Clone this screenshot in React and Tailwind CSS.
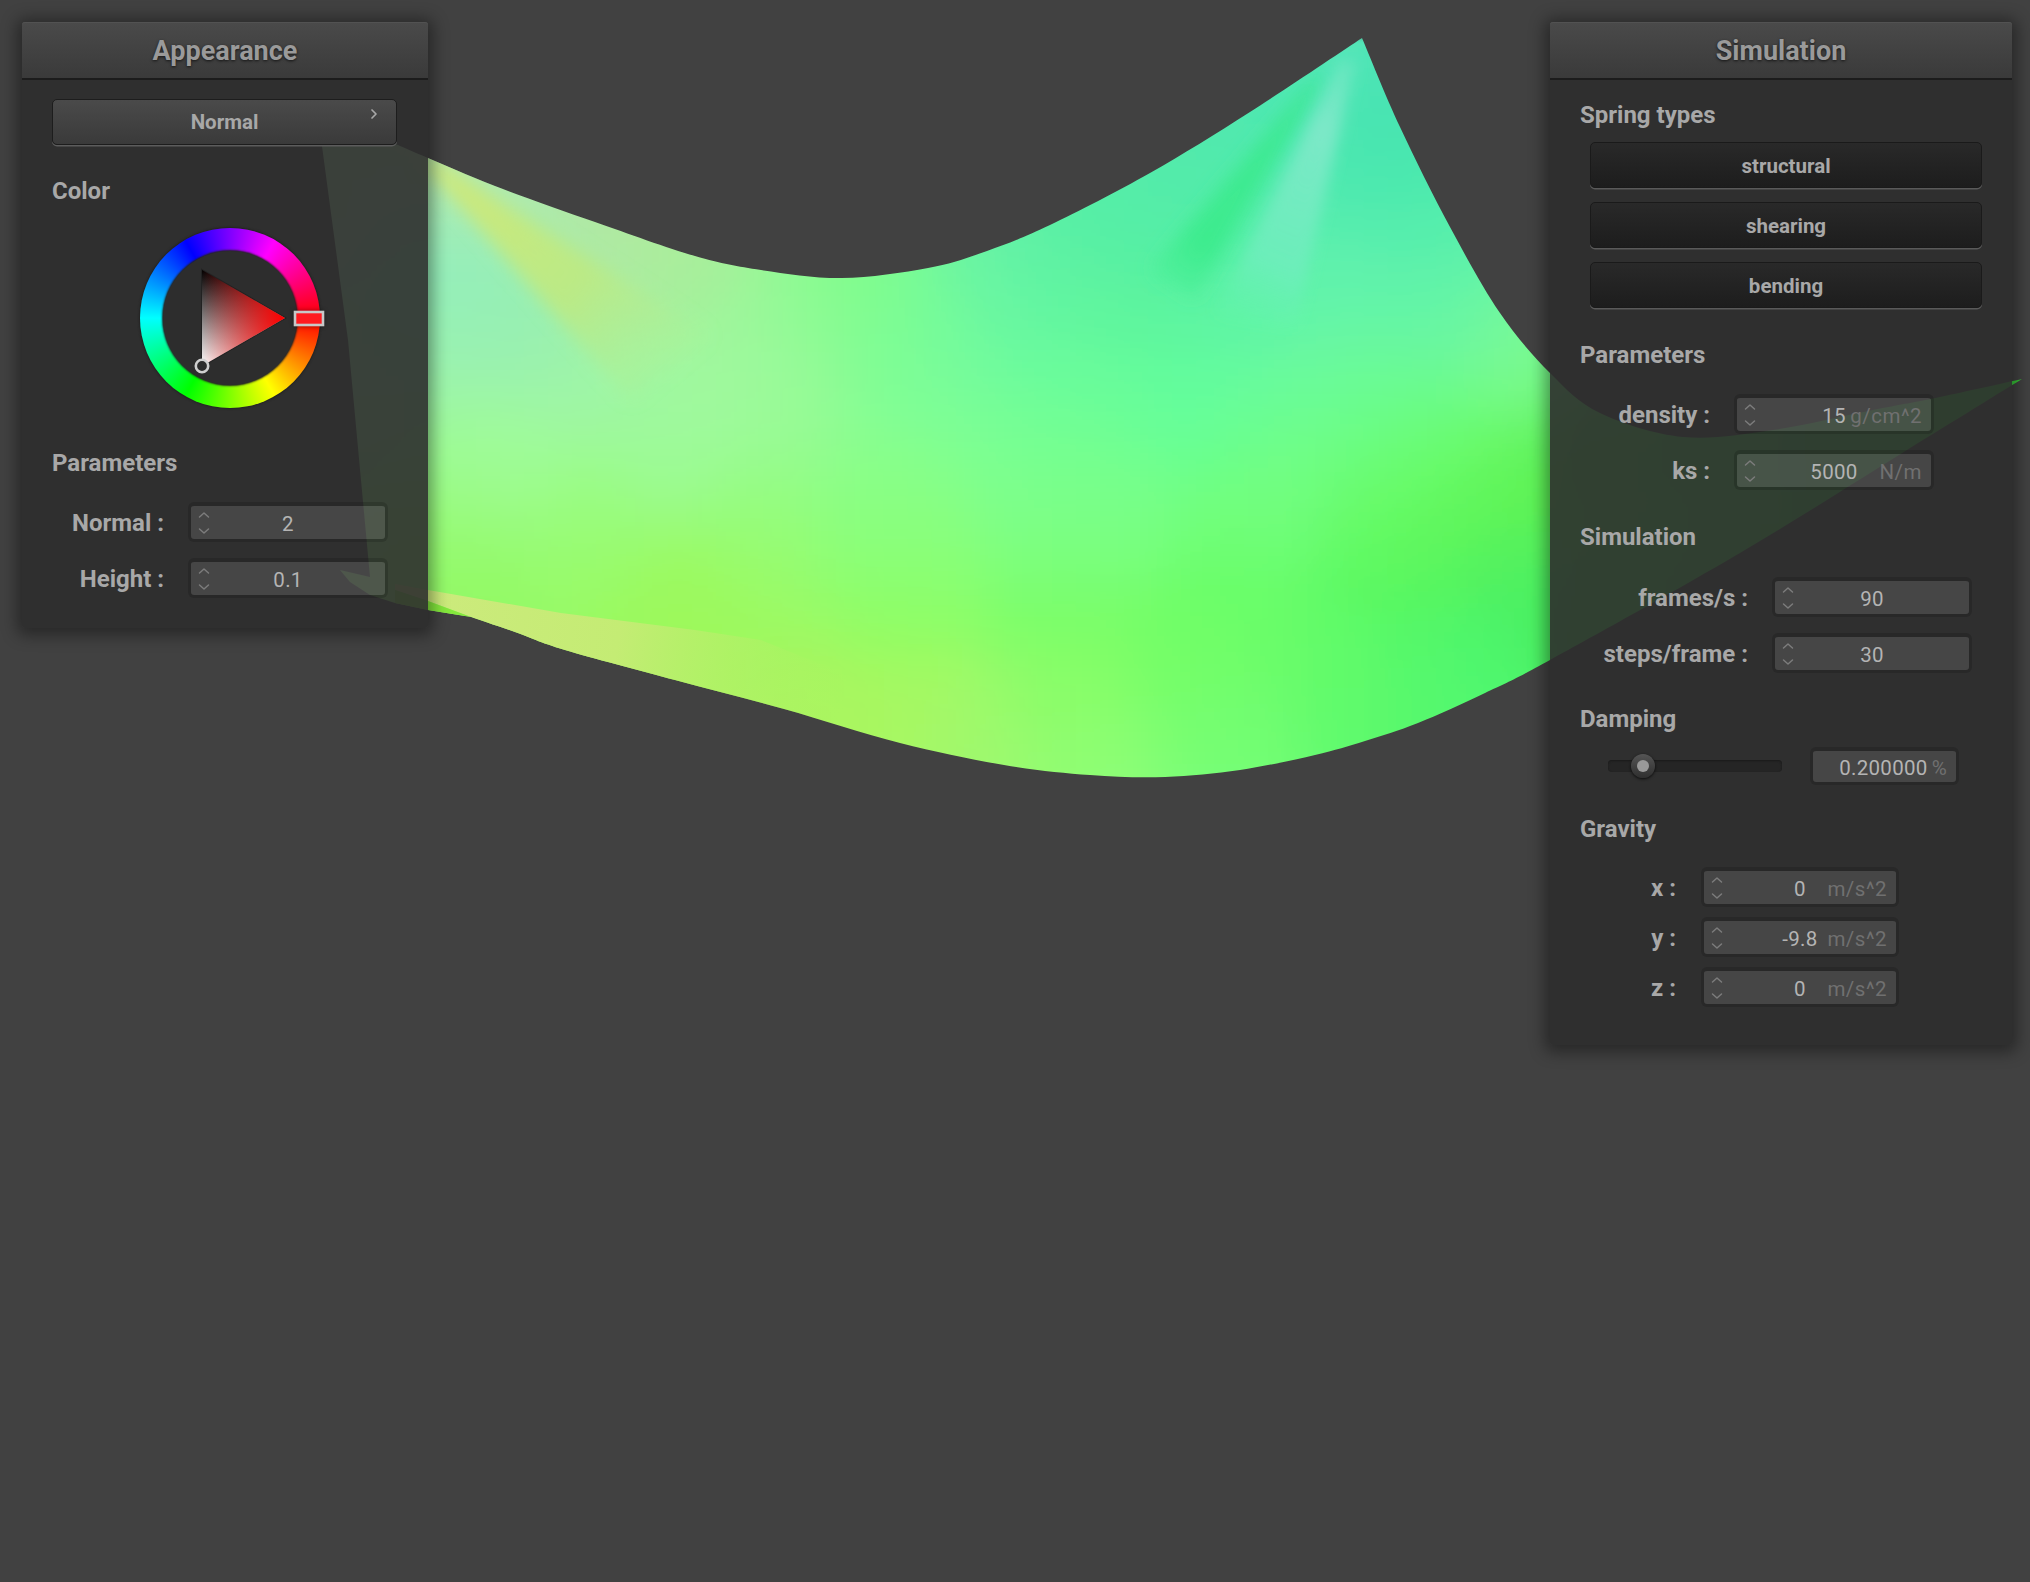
import React from "react";

const catmull = (pts) => {
  let d = "";
  for (let i = 0; i < pts.length - 1; i++) {
    const p0 = pts[i - 1] || pts[i];
    const p1 = pts[i];
    const p2 = pts[i + 1];
    const p3 = pts[i + 2] || p2;
    d += ` C${(p1[0] + (p2[0] - p0[0]) / 6).toFixed(1)} ${(p1[1] + (p2[1] - p0[1]) / 6).toFixed(1)} ${(p2[0] - (p3[0] - p1[0]) / 6).toFixed(1)} ${(p2[1] - (p3[1] - p1[1]) / 6).toFixed(1)} ${p2[0].toFixed(1)} ${p2[1].toFixed(1)}`;
  }
  return d;
};

const clothPath =
  "M318 113 L398 145" +
  catmull([[398, 145], [428, 158], [495, 186], [595, 222], [695, 256], [761, 270], [842, 278], [928, 268], [987, 251], [1050, 225], [1150, 173], [1250, 112], [1362, 38]]) +
  catmull([[1362, 38], [1400, 127], [1450, 227], [1500, 313], [1550, 373], [1600, 413], [1683, 437], [1773, 430], [1873, 410], [1940, 397], [2022, 379]]) +
  catmull([[2022, 379], [1907, 450], [1740, 553], [1550, 660], [1485, 693], [1418, 723], [1365, 741], [1315, 755], [1240, 770], [1165, 777], [1090, 775], [1004, 765], [900, 743], [784, 709], [675, 680], [565, 650], [515, 632], [471, 617]]) +
  " L428 610 L395 603 L370 595 L350 582 L340 570 L370 577 L348 340 L322 146 Z";

const samples = [
  [448, 167, "#b8e8b0"], [495, 180, "#b8e8a8"], [595, 233, "#b2e8a2"], [695, 263, "#a8ee9a"], [448, 243, "#90eec0"], [478, 283, "#90efba"],
  [528, 327, "#98efb0"], [448, 350, "#9cf2b0"], [595, 383, "#a0f5a8"], [728, 383, "#a2f8a0"], [795, 317, "#94fa98"],
  [861, 283, "#7efc88"], [911, 317, "#7cfe94"], [911, 400, "#80ff94"], [795, 417, "#96fb94"], [661, 450, "#9dfa9a"],
  [495, 450, "#a0fc9c"], [448, 483, "#9cfc90"], [595, 517, "#98fe80"], [761, 517, "#94fe80"], [895, 517, "#86ff80"],
  [448, 550, "#96fb70"], [595, 577, "#98fa66"], [761, 583, "#98fb68"], [911, 550, "#88ff70"], [448, 583, "#90f85a"],
  [661, 617, "#9cf858"], [711, 627, "#a0f858"], [895, 600, "#90fe60"], [802, 700, "#acf460"], [900, 717, "#a8f860"],
  [983, 750, "#a0f870"], [1107, 767, "#90fe78"], [1232, 760, "#78fe78"], [1398, 717, "#58f868"], [900, 500, "#8cff90"],
  [1000, 320, "#62f6a4"], [950, 360, "#78fc9c"], [1000, 450, "#7cff94"], [1066, 400, "#68ff9c"], [1190, 407, "#60ffa0"],
  [1356, 417, "#6cff90"], [1066, 500, "#78ff88"], [1232, 500, "#70ff78"], [1398, 483, "#6cfc68"], [1501, 517, "#62f050"],
  [1398, 540, "#60f858"], [1501, 573, "#46f068"], [1398, 587, "#52f868"], [1232, 587, "#68fe68"], [1066, 587, "#78fe68"],
  [1190, 667, "#74fe64"], [1315, 667, "#66fc68"], [1481, 660, "#50f86e"], [1066, 700, "#88fe66"], [1232, 717, "#70fe70"],
  [1356, 717, "#60fa70"], [1522, 587, "#48f068"], [1460, 690, "#50f872"], [1439, 533, "#60f450"],
  [1357, 50, "#5ce8bc"], [1250, 280, "#58f0a8"], [1223, 313, "#60f4a8"], [1150, 313, "#56f29a"], [1250, 97, "#50e8b0"],
  [1183, 163, "#50e8ac"], [1117, 197, "#54ecaa"], [1083, 237, "#56f0a4"], [1083, 297, "#60f4a0"], [1083, 363, "#6afa9c"],
  [1383, 97, "#40e0b0"], [1383, 163, "#48e6b0"], [1417, 213, "#50ecac"], [1450, 280, "#5cf2ac"], [1350, 280, "#62f2b0"],
  [1300, 330, "#68f4ac"], [1400, 330, "#66f6a4"], [1500, 330, "#76f8a0"], [1533, 373, "#80fc88"], [1383, 397, "#6cfc90"],
  [1283, 397, "#6cfe94"], [1183, 397, "#66ff98"], [1083, 430, "#70ff94"], [1450, 447, "#68fe78"], [1517, 497, "#66f850"],
  [1283, 480, "#74fe84"], [1383, 497, "#6afe70"], [1117, 497, "#7aff86"], [1050, 497, "#80ff88"], [987, 256, "#68f0a8"],
  [1300, 180, "#52eab0"], [1200, 230, "#54eea6"],
  [340, 200, "#b0e8b0"], [350, 400, "#a0f0a8"], [360, 560, "#96f880"],
  [1600, 450, "#46e050"], [1800, 470, "#42d850"], [1900, 430, "#40d048"], [2020, 380, "#38c838"], [1600, 620, "#46e048"], [1720, 550, "#44d848"],
].map(([x, y, c]) => [x, y, [1, 3, 5].map((i) => parseInt(c.slice(i, i + 2), 16))]);

const sampleColor = (x, y) => {
  let tot = 0;
  const sum = [0, 0, 0];
  for (const [sx, sy, c] of samples) {
    const d = (sx - x) ** 2 + (sy - y) ** 2;
    const w = Math.exp(-d / 5000) + 1e-6 / (1 + d / 10000);
    tot += w;
    sum[0] += w * c[0];
    sum[1] += w * c[1];
    sum[2] += w * c[2];
  }
  return `rgb(${sum.map((n) => Math.round(n / tot)).join(",")})`;
};

const stopXs = [];
for (let x = 320; x <= 1600; x += 24) stopXs.push(x);
stopXs.push(1800, 2030);
const bandYs = [];
for (let y = 36; y < 790; y += 4) bandYs.push(y);

function Cloth() {
  return (
    <svg className="absolute inset-0" width="2030" height="1582" viewBox="0 0 2030 1582">
      <defs>
        <clipPath id="cloth">
          <path d={clothPath} />
        </clipPath>
        {bandYs.map((y) => (
          <linearGradient key={y} id={`band${y}`} gradientUnits="userSpaceOnUse" x1="320" x2="2030" y1="0" y2="0">
            {stopXs.map((x) => (
              <stop key={x} offset={(x - 320) / 1710} stopColor={sampleColor(x, y + 2)} />
            ))}
          </linearGradient>
        ))}
        <filter id="soft" x="-5%" y="-5%" width="110%" height="110%">
          <feGaussianBlur stdDeviation="3" />
        </filter>
        <filter id="crease" x="-40%" y="-40%" width="180%" height="180%">
          <feGaussianBlur stdDeviation="9" />
        </filter>
        <filter id="creaseTight" x="-40%" y="-40%" width="180%" height="180%">
          <feGaussianBlur stdDeviation="7" />
        </filter>
        <linearGradient id="yellowFade" gradientUnits="userSpaceOnUse" x1="430" y1="170" x2="700" y2="380">
          <stop offset="0" stopColor="#d0e878" stopOpacity="1" />
          <stop offset="0.55" stopColor="#bcea84" stopOpacity="0.95" />
          <stop offset="1" stopColor="#aef096" stopOpacity="0" />
        </linearGradient>
        <linearGradient id="darkFade" gradientUnits="userSpaceOnUse" x1="1320" y1="80" x2="1150" y2="320">
          <stop offset="0" stopColor="#3ce890" stopOpacity="0.9" />
          <stop offset="0.7" stopColor="#3cec8c" stopOpacity="0.9" />
          <stop offset="1" stopColor="#4cf096" stopOpacity="0" />
        </linearGradient>
        <linearGradient id="brightFade" gradientUnits="userSpaceOnUse" x1="1350" y1="60" x2="1240" y2="330">
          <stop offset="0" stopColor="#7ce8c8" stopOpacity="0.5" />
          <stop offset="0.25" stopColor="#7ce8c8" stopOpacity="1" />
          <stop offset="0.75" stopColor="#6eeebc" stopOpacity="0.85" />
          <stop offset="1" stopColor="#66f4ae" stopOpacity="0" />
        </linearGradient>
        <linearGradient id="foldFade" gradientUnits="userSpaceOnUse" x1="430" y1="600" x2="850" y2="680">
          <stop offset="0" stopColor="#ccea7c" stopOpacity="1" />
          <stop offset="0.45" stopColor="#c4ec74" stopOpacity="1" />
          <stop offset="0.75" stopColor="#b4f068" stopOpacity="0.6" />
          <stop offset="1" stopColor="#a8f460" stopOpacity="0" />
        </linearGradient>
      </defs>
      <g clipPath="url(#cloth)">
        <g filter="url(#soft)">
          {bandYs.map((y) => (
            <rect key={y} x="300" y={y} width="1730" height="5" fill={`url(#band${y})`} />
          ))}
        </g>
        <polygon points="420,160 436,160 710,335 630,400" fill="url(#yellowFade)" filter="url(#crease)" />
        <polygon points="1322,78 1314,78 1150,270 1195,300" fill="url(#darkFade)" filter="url(#crease)" />
        <polygon points="1356,60 1340,60 1215,315 1295,325" fill="url(#brightFade)" filter="url(#creaseTight)" />
        <polygon points="395,584 428,590 561,613 695,630 761,640 860,680 880,740 565,655 471,617 428,601 395,590" fill="url(#foldFade)" />
        <polygon points="395,590 428,601 471,617 428,612 395,604" fill="#84e83c" />
      </g>
    </svg>
  );
}

function Spinner() {
  return (
    <svg width="14" height="24" viewBox="0 0 14 24" fill="none" stroke="#7c7c7c" strokeWidth="1.5" strokeLinecap="round" strokeLinejoin="round">
      <path d="M2.5 6 L7 2 L11.5 6" />
      <path d="M2.5 18 L7 22 L11.5 18" />
    </svg>
  );
}

function Field({ value, unit, w = "w-[200px]", h = "h-10" }) {
  return (
    <div className={`${w} ${h} grid grid-cols-[1fr_auto_1fr] items-center rounded-md border-[3px] border-t-4 border-black/15 bg-white/[0.115] bg-clip-padding text-[20.5px] text-[#b4b4b4]`}>
      <div className="flex pl-[6px]">
        <Spinner />
      </div>
      <div className="pt-[3px] tracking-[0.3px]">{value}</div>
      <div className="justify-self-end pr-[9px] pt-[3px] text-[20.5px] tracking-[0.5px] text-[#707070]">{unit}</div>
    </div>
  );
}

function Row({ label, labelW, gap, className = "", ...field }) {
  return (
    <div className={`flex items-center ${className}`}>
      <div className={`${labelW} pt-[2px] text-right text-[24px] font-bold leading-7 text-[#a8a8a8]`}>{label}</div>
      <div className={gap}>
        <Field {...field} />
      </div>
    </div>
  );
}

function Section({ children, className = "" }) {
  return <div className={`text-[24px] font-bold leading-7 text-[#a8a8a8] ${className}`}>{children}</div>;
}

function Header({ children }) {
  return (
    <div className="flex h-[58px] items-center justify-center rounded-t-[3px] border-b-2 border-[#1c1c1c] bg-gradient-to-b from-[#4a4a4a] to-[#3a3a3a] text-[27px] font-bold text-[#9a9a9a] shadow-[inset_0_1px_0_#525252] [text-shadow:0_1px_3px_rgba(0,0,0,0.7)]">
      <span className="mt-[3px]">{children}</span>
    </div>
  );
}

function SpringButton({ children, className = "" }) {
  return (
    <div className={`ml-[10px] flex h-[46px] w-[392px] items-center justify-center rounded-[5px] border border-[#1a1a1a] bg-gradient-to-b from-[#292929] to-[#1d1d1d] pt-[3px] text-[20.5px] font-bold text-[#a8a8a8] shadow-[0_1.5px_0_#5a5a5a] ${className}`}>
      {children}
    </div>
  );
}

function Wheel() {
  return (
    <div className="relative ml-[88px] mt-[23px] h-[180px] w-[180px] rounded-full bg-[conic-gradient(from_90deg,#ff0000,#ffff00,#00ff00,#00ffff,#0000ff,#ff00ff,#ff0000)] shadow-[0_0_2px_1px_#222222]">
      <div className="absolute inset-[23px] rounded-full bg-[#2d2d2d] shadow-[0_0_2px_1px_#222222]" />
      <svg className="absolute -left-[10px] -top-[10px]" width="220" height="200" viewBox="0 0 220 200" fill="none">
        <defs>
          <linearGradient id="triV" gradientUnits="userSpaceOnUse" x1="0" y1="52" x2="0" y2="147">
            <stop offset="0" stopColor="#000000" />
            <stop offset="1" stopColor="#ffffff" />
          </linearGradient>
          <linearGradient id="triH" gradientUnits="userSpaceOnUse" x1="71" y1="0" x2="154" y2="0">
            <stop offset="0" stopColor="#ff0000" stopOpacity="0" />
            <stop offset="1" stopColor="#ff0000" stopOpacity="1" />
          </linearGradient>
          <filter id="handleShadow" x="-30%" y="-60%" width="160%" height="220%">
            <feGaussianBlur stdDeviation="2.5" />
          </filter>
        </defs>
        <polygon points="72,52 155,100 72,148" fill="none" stroke="#222222" strokeWidth="2" />
        <polygon points="72,52 155,100 72,148" fill="url(#triV)" />
        <polygon points="72,52 155,100 72,148" fill="url(#triH)" />
        <rect x="164" y="93" width="30" height="15" fill="#000000" opacity="0.5" filter="url(#handleShadow)" />
        <rect x="165" y="94" width="28" height="13" fill="#ff1a20" stroke="#c8c8c8" strokeWidth="2.6" />
        <circle cx="72" cy="148" r="6.2" fill="#2c2c2c" stroke="#cfcfcf" strokeWidth="2.6" />
      </svg>
    </div>
  );
}

export default function App() {
  return (
    <div className="relative flex h-[1582px] w-[2030px] items-start justify-between overflow-hidden bg-[#414141] pl-[22px] pr-[18px] pt-[22px] font-['Roboto',sans-serif]">
      <Cloth />
      <div className="relative h-[606px] w-[406px] rounded-[3px] bg-[#2d2d2d]/90 shadow-[0_2px_16px_5px_rgba(0,0,0,0.4)]">
        <Header>Appearance</Header>
        <div className="px-[30px]">
          <div className="mt-[19px] flex h-[46px] w-[345px] items-center justify-center rounded-[5px] border border-[#1d1d1d] bg-gradient-to-b from-[#4a4a4a] to-[#3a3a3a] text-[20.5px] font-bold text-[#a8a8a8] shadow-[0_1.5px_0_#5c5c5c]">
            <span className="relative w-full pt-[1px] text-center">
              Normal
              <svg className="absolute right-[18px] top-[2px]" width="8" height="12" viewBox="0 0 8 12" fill="none" stroke="#a8a8a8" strokeWidth="1.7" strokeLinecap="round" strokeLinejoin="round">
                <path d="M2 2 L6 6 L2 10" />
              </svg>
            </span>
          </div>
          <Section className="mt-[32px]">Color</Section>
          <Wheel />
          <Section className="mt-[41px]">Parameters</Section>
          <Row label="Normal :" labelW="w-[112px]" gap="ml-[24px]" value="2" className="mt-[25px]" />
          <Row label="Height :" labelW="w-[112px]" gap="ml-[24px]" value="0.1" className="mt-[16px]" />
        </div>
      </div>
      <div className="relative h-[1023px] w-[462px] rounded-[3px] bg-[#2d2d2d]/90 shadow-[0_2px_16px_5px_rgba(0,0,0,0.4)]">
        <Header>Simulation</Header>
        <div className="px-[30px]">
          <Section className="mt-[21px]">Spring types</Section>
          <SpringButton className="mt-[13px]">structural</SpringButton>
          <SpringButton className="mt-[14px]">shearing</SpringButton>
          <SpringButton className="mt-[14px]">bending</SpringButton>
          <Section className="mt-[33px]">Parameters</Section>
          <Row label="density :" labelW="w-[130px]" gap="ml-[24px]" value="15" unit="g/cm^2" className="mt-[25px]" />
          <Row label="ks :" labelW="w-[130px]" gap="ml-[24px]" value="5000" unit="N/m" className="mt-[16px]" />
          <Section className="mt-[33px]">Simulation</Section>
          <Row label="frames/s :" labelW="w-[168px]" gap="ml-[24px]" value="90" className="mt-[26px]" />
          <Row label="steps/frame :" labelW="w-[168px]" gap="ml-[24px]" value="30" className="mt-[16px]" />
          <Section className="mt-[32px]">Damping</Section>
          <div className="mt-[14px] flex items-center">
            <div className="relative ml-[28px] h-[12px] w-[174px] rounded-[4px] bg-[#252525] shadow-[inset_0_1px_2px_#1a1a1a]">
              <div className="absolute left-[23px] top-[-6px] flex h-[24px] w-[24px] items-center justify-center rounded-full bg-gradient-to-b from-[#555555] to-[#2f2f2f] shadow-[0_1px_3px_rgba(0,0,0,0.8)]">
                <div className="h-[12px] w-[12px] rounded-full bg-[#999999]" />
              </div>
            </div>
            <div className="ml-[28px] flex h-[38px] w-[149px] items-center justify-end rounded-md border-[3px] border-t-4 border-black/15 bg-white/[0.115] bg-clip-padding pr-[9px] pt-[3px] text-[20.5px] tracking-[0.3px] text-[#b4b4b4]">
              0.200000
              <span className="ml-[4px] text-[#707070]">%</span>
            </div>
          </div>
          <Section className="mt-[30px]">Gravity</Section>
          <Row label="x :" labelW="w-[96px]" gap="ml-[25px]" w="w-[198px]" value="0" unit="m/s^2" className="mt-[24px]" />
          <Row label="y :" labelW="w-[96px]" gap="ml-[25px]" w="w-[198px]" value="-9.8" unit="m/s^2" className="mt-[10px]" />
          <Row label="z :" labelW="w-[96px]" gap="ml-[25px]" w="w-[198px]" value="0" unit="m/s^2" className="mt-[10px]" />
        </div>
      </div>
    </div>
  );
}
